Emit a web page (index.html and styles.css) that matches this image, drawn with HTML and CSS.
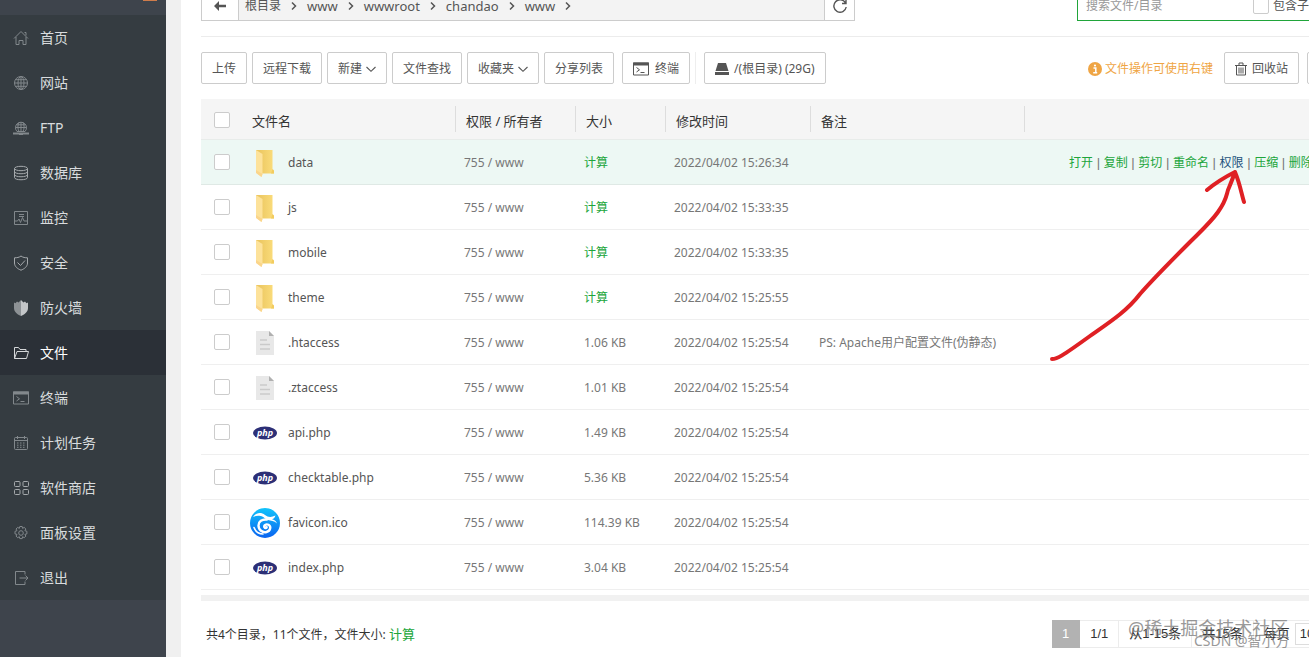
FILE: index.html
```html
<!DOCTYPE html>
<html lang="zh-CN">
<head>
<meta charset="utf-8">
<title>文件</title>
<link rel="stylesheet" href="styles.css">
</head>
<body>
<svg class="sprite" aria-hidden="true">
  <defs>
    <linearGradient id="back" x1="0" x2="1"><stop offset="0" stop-color="#e9c35c"/><stop offset="1" stop-color="#fbdd7c"/></linearGradient>
    <linearGradient id="blue" x1="0" y1="0" x2="0" y2="1"><stop offset="0" stop-color="#12c4fb"/><stop offset="1" stop-color="#0a63f0"/></linearGradient>
  </defs>
  <symbol id="folder" viewBox="0 0 30 30">
    <path d="M6 2h16.500v19.500l1.500 1v3H12L6 21z" fill="url(#back)"/>
    <path d="M22.500 21l1.500 1.500v3h-3z" fill="#f2cc5f"/>
    <path d="M6 2l6.500 4v20l-1 3L6 24.500z" fill="#fde29a"/>
    <path d="M6 25l5.500 4 1-3L6 22z" fill="#fbd58b"/>
  </symbol>
  <symbol id="doc" viewBox="0 0 30 30">
    <path d="M6 3h13l5 5v19H6z" fill="#e8e8e8"/><path d="M19 3l5 5h-5z" fill="#b0b0b0"/>
    <path d="M10 12h7M10 16.500h10M10 21h10" stroke="#cacaca" stroke-width="1.500"/>
  </symbol>
  <symbol id="php" viewBox="0 0 30 30">
    <ellipse cx="15" cy="15" rx="12" ry="6.500" fill="#2c2f76"/>
    <text x="15" y="18" text-anchor="middle" class="php-word">php</text>
  </symbol>
  <symbol id="swirl" viewBox="0 0 30 30">
    <circle cx="15" cy="15" r="15" fill="url(#blue)"/>
    <path d="M3 9C6 4.500 11 4 15 7c3 2.200 6 2.600 10.500.5-.8 2.500-2 3.300-3.500 3.700 2 .3 4 1.500 5 4.300-3-2.800-6-2.800-9-3.500-3-.8-4-3.500-7.500-4C7.500 7.500 5 8 3 9z" fill="#fff"/>
    <path d="M17 11.500c-5-.5-8.500 2-8.500 6 0 4.500 4 7.500 8 6.500 4-1 5-5.500 2-7.200-2.500-1.300-5 .7-4 2.700.6 1 2 .8 2.200-.2" fill="none" stroke="#fff" stroke-width="2.400" stroke-linecap="round"/>
    <path d="M4 19.500c1.500 4 4.500 6.500 9 6.500" fill="none" stroke="#fff" stroke-width="1.600" stroke-linecap="round"/>
  </symbol>
  <symbol id="term" viewBox="0 0 16 16">
    <path d="M.5 2h15v12H.5z" fill="none" stroke="currentColor"/><path d="M0 1.500h16v3H0z" fill="currentColor"/>
    <path d="M3.500 6.500L6.500 8.800l-3 2.200M7.500 11.500h4" fill="none" stroke="currentColor"/>
  </symbol>
  <symbol id="chev" viewBox="0 0 10 10"><path d="M.5 3L5 7.300 9.500 3" fill="none" stroke="currentColor" stroke-width="1.100"/></symbol>
  <symbol id="next" viewBox="0 0 10 10"><path d="M3 1.500L6.500 5 3 8.500" fill="none" stroke="currentColor" stroke-width="1.500"/></symbol>
</svg>
<div class="app">
  <nav class="side">
    <div class="side-top"><span class="badge"></span></div>
    <ul class="menu">
      <li><a href="#"><svg viewBox="0 0 16 16"><path d="M1 8.500L8 1.500l7 7M3 7v7.500h3v-4h4v4h3V7M11.500 2.500h1.500v3"/></svg>首页</a></li>
      <li><a href="#"><svg viewBox="0 0 16 16"><circle cx="8" cy="8" r="6.500"/><ellipse cx="8" cy="8" rx="3" ry="6.500"/><path d="M8 1.500v13M1.500 8h13M2.500 4.700h11M2.500 11.300h11"/></svg>网站</a></li>
      <li><a href="#"><svg viewBox="0 0 16 16"><path d="M4 11.500a5.500 5.500 0 1 1 8 0z"/><path d="M8 2v10M2.500 7.500h11M3.500 4.800h9M6 11.500c-1.500-3-1.500-6 0-9M10 11.500c1.500-3 1.500-6 0-9"/><path d="M0 13.500h16M6 14h4" stroke-width="2"/></svg>FTP</a></li>
      <li><a href="#"><svg class="bright" viewBox="0 0 16 16"><ellipse cx="8" cy="3.500" rx="6.500" ry="2.200"/><path d="M1.500 3.500v9c0 3 13 3 13 0v-9M1.500 6.500c0 3 13 3 13 0M1.500 9.500c0 3 13 3 13 0"/></svg>数据库</a></li>
      <li><a href="#"><svg viewBox="0 0 16 16"><path d="M1.500 1.500h13v13h-13zM1.500 11h3l1.500-2 1.500 3.500 2-5 1.500 3.500h3.500M6 4.500h5M6 6.500h5"/></svg>监控</a></li>
      <li><a href="#"><svg class="bright" viewBox="0 0 16 16"><path d="M8 1C6 2.500 4 2.800 1.500 2.800V8c0 3.500 3 5.800 6.500 7.200 3.500-1.400 6.500-3.700 6.500-7.200V2.800C12 2.800 10 2.500 8 1zM4.500 7.500l3 3 4.500-5"/></svg>安全</a></li>
      <li><a href="#"><svg class="solid" viewBox="0 0 16 16"><path d="M8 0v16C3.500 14 1 11.500 1 8V2.500l1.500.8L4 1.500l1.500 1z" fill="#8d9295"/><path d="M8 0v16c4.500-2 7-4.500 7-8V2.500l-1.500.8L12 1.500l-1.500 1z" fill="#c3c6c8"/></svg>防火墙</a></li>
      <li><a href="#" class="active" aria-current="page"><svg viewBox="0 0 16 16"><path d="M1.500 13.500V2.500h4l1.500 2h6v2M1.500 13.500l2.500-7h11.500l-2 7z"/></svg>文件</a></li>
      <li><a href="#"><svg class="solid" viewBox="0 0 16 16"><use href="#term"/></svg>终端</a></li>
      <li><a href="#"><svg viewBox="0 0 16 16"><rect x="1.500" y="2.500" width="13" height="12" rx="1"/><path d="M1.500 5.500h13M4.500 1v3M11.500 1v3"/><path d="M4 8h8.500M4 10.200h8.500M4 12.300h8.500" stroke-dasharray="1.500 1.500"/></svg>计划任务</a></li>
      <li><a href="#"><svg class="bright" viewBox="0 0 16 16"><rect x="1.500" y="1.500" width="5.500" height="5" rx="1"/><rect x="10" y="1.500" width="5.500" height="5" rx="1"/><rect x="1.500" y="9.500" width="5.500" height="5" rx="1"/><rect x="10" y="9.500" width="5.500" height="5" rx="1"/></svg>软件商店</a></li>
      <li><a href="#"><svg viewBox="0 0 16 16"><circle cx="8" cy="8" r="2.300"/><path d="M6.800 1.500h2.400l.4 1.900 1.600-1 1.700 1.600-1 1.700 2 .6v2.600l-2 .5 1 1.700-1.700 1.600-1.600-1-.4 1.900H6.800l-.5-1.900-1.600 1L3 11.100l1-1.700-2-.5V6.300l2-.6-1-1.700 1.700-1.600 1.600 1z"/></svg>面板设置</a></li>
      <li><a href="#"><svg viewBox="0 0 16 16"><path d="M12 4.500v-3H2.500v13H12v-3M6.500 8h8.500M12.500 5.500L15 8l-2.500 2.500"/></svg>退出</a></li>
    </ul>
  </nav>
  <main class="main">
    <div class="topbar">
      <div class="path">
        <button class="back" aria-label="返回"><svg viewBox="0 0 12 12"><path d="M0 6l5-5v3.700h7v2.600H5V11z" fill="currentColor"/></svg></button>
        <div class="crumbs">
          <a href="#">根目录</a><svg><use href="#next"/></svg><a href="#">www</a><svg><use href="#next"/></svg><a href="#">wwwroot</a><svg><use href="#next"/></svg><a href="#">chandao</a><svg><use href="#next"/></svg><a href="#">www</a><svg><use href="#next"/></svg>
        </div>
        <button class="reload" aria-label="刷新"><svg viewBox="0 0 16 16"><path d="M13.500 5A6.200 6.200 0 1 0 14.200 9M14 1.500V5.500h-4" fill="none" stroke="currentColor" stroke-width="1.400"/></svg></button>
      </div>
      <div class="search">
        <input class="query" type="text" placeholder="搜索文件/目录" aria-label="搜索文件/目录">
        <label><input type="checkbox">包含子目录</label>
      </div>
    </div>
    <div class="tools">
      <div class="group">
        <button>上传</button>
        <button>远程下载</button>
        <button>新建<svg class="caret"><use href="#chev"/></svg></button>
        <button>文件查找</button>
        <button>收藏夹<svg class="caret"><use href="#chev"/></svg></button>
        <button>分享列表</button>
      </div>
      <button><svg class="lead"><use href="#term"/></svg>终端</button>
      <span class="rule"></span>
      <button class="disk"><svg viewBox="0 0 14 14"><path d="M3 1h8l2.500 8h-13zM0 10h14v3H0z" fill="currentColor"/></svg>/(根目录) (29G)</button>
      <div class="right">
        <span class="hint"><svg viewBox="0 0 14 14"><circle cx="7" cy="7" r="7" fill="#efa544"/><path d="M5.500 6h2.300v4.500M5.200 10.700h4" fill="none" stroke="#fff" stroke-width="1.500"/><circle cx="7" cy="3.500" r="1.100" fill="#fff"/></svg>文件操作可使用右键</span>
        <button class="bin"><svg viewBox="0 0 12 14"><path d="M0 3.500h12M4 3V1h4v2M1.500 3.500v9.500h9V3.500M4 5.500v6M6 5.500v6M8 5.500v6" fill="none" stroke="currentColor"/></svg>回收站</button>
        <button aria-label="视图"></button>
      </div>
    </div>
    <div class="list">
      <table>
        <colgroup><col class="c-check"><col class="c-name"><col class="c-perm"><col class="c-size"><col class="c-time"><col class="c-note"><col></colgroup>
        <thead>
          <tr><th><input type="checkbox" aria-label="全选"></th><th><span>文件名</span></th><th><span>权限 / 所有者</span></th><th><span>大小</span></th><th><span>修改时间</span></th><th><span>备注</span></th><th><span></span></th></tr>
        </thead>
        <tbody>
          <tr class="on"><td><input type="checkbox" aria-label="data"></td><td><div class="file"><svg><use href="#folder"/></svg>data</div></td><td>755 / www</td><td><a href="#">计算</a></td><td>2022/04/02 15:26:34</td><td></td><td class="acts"><a href="#">打开</a><i> | </i><a href="#">复制</a><i> | </i><a href="#">剪切</a><i> | </i><a href="#">重命名</a><i> | </i><a href="#" class="hover">权限</a><i> | </i><a href="#">压缩</a><i> | </i><a href="#">删除</a></td></tr>
          <tr><td><input type="checkbox" aria-label="js"></td><td><div class="file"><svg><use href="#folder"/></svg>js</div></td><td>755 / www</td><td><a href="#">计算</a></td><td>2022/04/02 15:33:35</td><td></td><td></td></tr>
          <tr><td><input type="checkbox" aria-label="mobile"></td><td><div class="file"><svg><use href="#folder"/></svg>mobile</div></td><td>755 / www</td><td><a href="#">计算</a></td><td>2022/04/02 15:33:35</td><td></td><td></td></tr>
          <tr><td><input type="checkbox" aria-label="theme"></td><td><div class="file"><svg><use href="#folder"/></svg>theme</div></td><td>755 / www</td><td><a href="#">计算</a></td><td>2022/04/02 15:25:55</td><td></td><td></td></tr>
          <tr><td><input type="checkbox" aria-label=".htaccess"></td><td><div class="file"><svg><use href="#doc"/></svg>.htaccess</div></td><td>755 / www</td><td>1.06 KB</td><td>2022/04/02 15:25:54</td><td>PS: Apache用户配置文件(伪静态)</td><td></td></tr>
          <tr><td><input type="checkbox" aria-label=".ztaccess"></td><td><div class="file"><svg><use href="#doc"/></svg>.ztaccess</div></td><td>755 / www</td><td>1.01 KB</td><td>2022/04/02 15:25:54</td><td></td><td></td></tr>
          <tr><td><input type="checkbox" aria-label="api.php"></td><td><div class="file"><svg><use href="#php"/></svg>api.php</div></td><td>755 / www</td><td>1.49 KB</td><td>2022/04/02 15:25:54</td><td></td><td></td></tr>
          <tr><td><input type="checkbox" aria-label="checktable.php"></td><td><div class="file"><svg><use href="#php"/></svg>checktable.php</div></td><td>755 / www</td><td>5.36 KB</td><td>2022/04/02 15:25:54</td><td></td><td></td></tr>
          <tr><td><input type="checkbox" aria-label="favicon.ico"></td><td><div class="file"><svg><use href="#swirl"/></svg>favicon.ico</div></td><td>755 / www</td><td>114.39 KB</td><td>2022/04/02 15:25:54</td><td></td><td></td></tr>
          <tr><td><input type="checkbox" aria-label="index.php"></td><td><div class="file"><svg><use href="#php"/></svg>index.php</div></td><td>755 / www</td><td>3.04 KB</td><td>2022/04/02 15:25:54</td><td></td><td></td></tr>
        </tbody>
      </table>
    </div>
    <div class="foot">
      <div>共4个目录，11个文件，文件大小: <a href="#">计算</a></div>
      <div class="pages"><span class="cur">1</span><span>1/1</span><span>从1-15条</span><span>共15条</span><span class="per"><label for="per">每页</label><input id="per" type="text" value="100"></span></div>
    </div>
  </main>
</div>
<svg class="arrow" viewBox="0 0 200 196" aria-hidden="true"><path d="M4 193c5 0 9-2 38-23 20-14 37-25 50-42 14-16 24-26 50-52 11-11 21-20 28-30 8-11 8-15 10-22 2-5 5-12 7-18M159 24c6-5 14-11 28-18 5 12 6 20 9 30"/></svg>
<div class="mark mark-a">@稀土掘金技术社区</div>
<div class="mark mark-b">CSDN @智小方</div>
</body>
</html>
```
FILE: styles.css
```css
* { box-sizing: border-box; }
body {
  margin: 0;
  height: 100vh;
  overflow: hidden;
  position: relative;
  background: #f0f0f0;
  color: #555;
  font: 12px/20px "Noto Sans", "Noto Sans CJK SC", sans-serif;
}
a { color: #20a53a; text-decoration: none; }
button, input { font: inherit; color: inherit; }
svg { flex: none; }
.sprite { position: absolute; width: 0; height: 0; }
.app { display: flex; height: 100%; }

.side { flex: none; width: 166px; background: #3e444c; }
.side-top { height: 15px; padding-right: 9px; display: flex; justify-content: flex-end; }
.badge { width: 14px; height: 1px; background: #cf7c4b; }
.menu { margin: 0; padding: 0; list-style: none; background: #353c41; }
.menu a {
  display: flex;
  align-items: center;
  gap: 11px;
  height: 45px;
  padding-left: 13px;
  color: #d9dcde;
  font-size: 14px;
}
.menu svg { width: 16px; height: 16px; fill: none; stroke: #82888c; stroke-width: 1; color: #82888c; }
.menu svg.bright { stroke: #a5a9ac; }
.menu svg.solid { stroke: none; }
.menu .active { background: #2b3037; color: #fff; }
.menu .active svg { stroke: #d5d7d9; }

.main { flex: 1; min-width: 0; margin-left: 15px; padding-left: 20px; background: #fff; overflow: hidden; }
.topbar { display: flex; justify-content: space-between; align-items: flex-end; height: 37px; padding-bottom: 15px; border-bottom: 1px solid #ececec; overflow: hidden; }
.path { display: flex; width: 654px; height: 30px; border: 1px solid #ccc; background: #f3f3f3; }
.path button { padding: 0; border: 0; background: #fff; display: flex; align-items: center; justify-content: center; }
.path .back { width: 37px; border-right: 1px solid #ccc; }
.path .reload { width: 30px; border-left: 1px solid #ccc; }
.back svg { width: 12px; height: 12px; }
.reload svg { width: 16px; height: 16px; }
.crumbs { flex: 1; display: flex; align-items: center; gap: 8px; padding-left: 6px; font-size: 13px; }
.crumbs a { color: #555; }
.crumbs a:first-child { font-size: 12px; }
.crumbs svg { width: 10px; height: 10px; }
.search { flex: none; width: 232px; height: 30px; display: flex; align-items: center; border: 1px solid #20a53a; border-right: 0; white-space: nowrap; }
.query { flex: none; width: 175px; border: 0; padding: 0 8px; outline: 0; }
.query::placeholder { color: #999; }
.search label { display: flex; align-items: center; gap: 4px; }

input[type="checkbox"] { appearance: none; flex: none; display: block; width: 16px; height: 16px; margin: 0; border: 1px solid #ccc; border-radius: 2px; background: #fff; }

.tools { display: flex; align-items: center; gap: 5px; padding: 15px 0; }
.tools button { display: flex; align-items: center; justify-content: center; flex: none; height: 32px; padding: 1px 10px 0; border: 1px solid #ccc; border-radius: 2px; background: #fff; white-space: nowrap; }
.group { display: flex; gap: 5px; margin-right: 3px; }
.caret { width: 10px; height: 10px; margin-left: 4px; }
.lead { width: 16px; height: 16px; margin-right: 6px; }
.rule { width: 1px; height: 32px; background: #eee; margin-right: 3px; }
.disk svg { width: 14px; height: 14px; margin-right: 5px; }
.right { flex: none; width: 221px; margin-left: auto; display: flex; align-items: center; gap: 8px; }
.hint { flex: none; display: flex; align-items: center; gap: 3px; width: 128px; padding-top: 2px; color: #efa544; white-space: nowrap; }
.hint svg { width: 14px; height: 14px; }
.bin svg { width: 12px; height: 14px; margin-right: 5px; }

.list { border-bottom: 6px solid #f1f1f1; padding-bottom: 5px; }
table { width: 100%; table-layout: fixed; border-collapse: separate; border-spacing: 0; }
.c-check { width: 41px; }
.c-name { width: 213px; }
.c-perm { width: 120px; }
.c-size { width: 90px; }
.c-time { width: 145px; }
.c-note { width: 214px; }
th { height: 41px; padding: 0; background: #f5f5f5; border-bottom: 1px solid #e8ecea; text-align: left; font-weight: 400; font-size: 13px; color: #333; }
th span { display: block; height: 26px; line-height: 30px; padding-left: 10px; border-left: 1px solid #ddd; }
th:nth-child(2) span { border-color: transparent; padding-left: 9px; }
th:first-child { padding-top: 2px; }
th input[type="checkbox"], td input[type="checkbox"] { margin-left: 13px; }
td { height: 45px; padding: 2px 0 0 9px; border-bottom: 1px solid #efefef; color: #777; white-space: nowrap; }
td:first-child { padding: 0; }
td:nth-child(2) { padding-left: 8px; }
.on td { background: #edf8f4; border-color: #dfe9e5; }
.file { display: flex; align-items: center; gap: 8px; color: #555; }
.file svg { width: 30px; height: 30px; }
.php-word { font: italic bold 9px "Open Sans", sans-serif; fill: #fff; }
td.acts { padding-left: 45px; overflow: hidden; }
.acts i { font: 13px/20px "Liberation Sans", sans-serif; }
.acts .hover { color: #23527c; }

.foot { display: flex; justify-content: space-between; align-items: center; padding: 19px 0 0 5px; color: #333; }
.foot a { font-size: 13px; }
.pages { flex: none; width: 257px; display: flex; font: 13px/26px "Liberation Sans", "Noto Sans CJK SC", sans-serif; white-space: nowrap; }
.pages > span { flex: none; height: 28px; padding: 0 10px; border: 1px solid #ececec; border-left: 0; }
.pages .cur { background: #b2b2b2; border-color: #b2b2b2; color: #fff; }
.pages .per { display: flex; align-items: center; gap: 5px; }
.per input { width: 50px; height: 22px; padding: 0 4px; border: 1px solid #ddd; }

.arrow { position: absolute; left: 1048px; top: 166px; width: 200px; height: 196px; fill: none; stroke: #df2024; stroke-width: 4; stroke-linecap: round; stroke-linejoin: round; }
.mark { position: absolute; color: #777; opacity: .75; white-space: nowrap; }
.mark-a { left: 1128px; top: 616px; font-size: 18px; line-height: 24px; }
.mark-b { left: 1194px; top: 632px; font-size: 14px; line-height: 18px; }
```
